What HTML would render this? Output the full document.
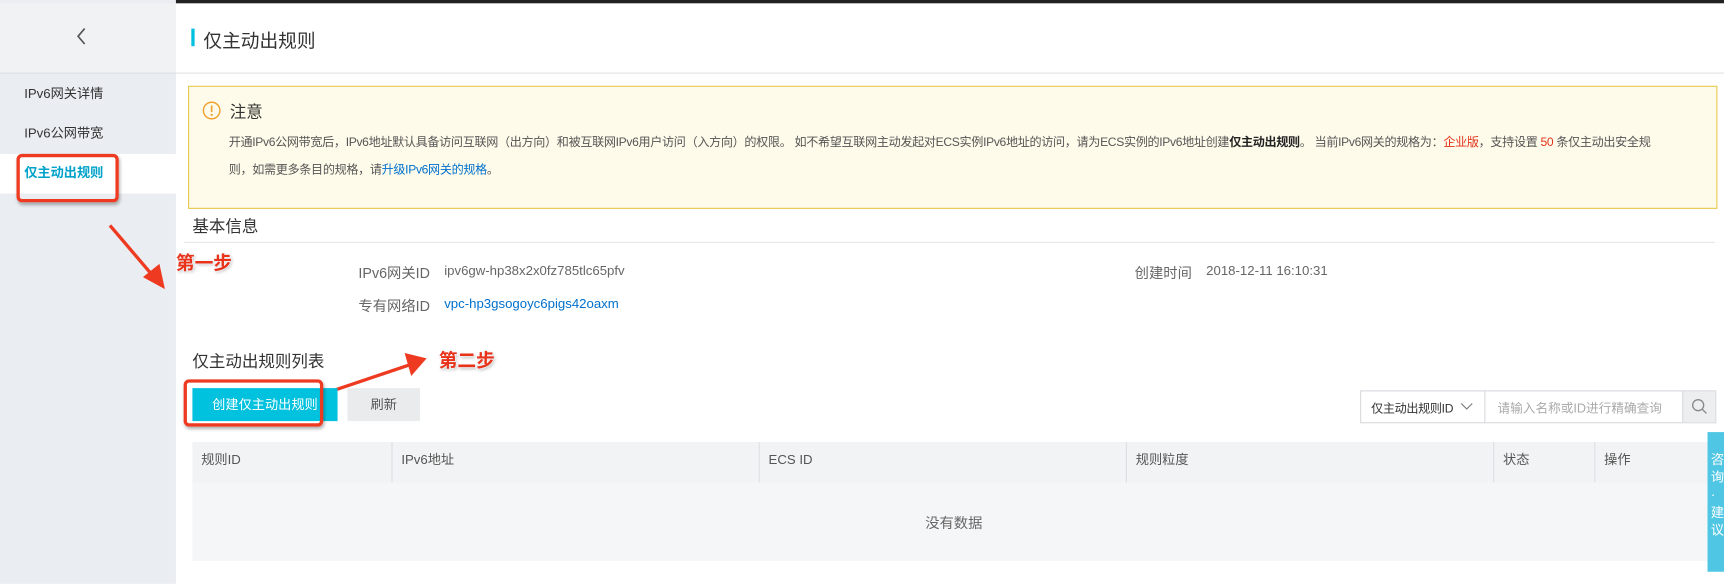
<!DOCTYPE html>
<html><head><meta charset="utf-8"><style>
*{margin:0;padding:0;box-sizing:border-box}
html,body{width:1724px;height:584px;overflow:hidden;background:#fff}
body{font-family:"Liberation Sans","Noto Sans CJK SC",sans-serif;color:#333;position:relative}
#w{position:absolute;left:0;top:0;width:1568px;height:531px;transform:scale(1.0995);transform-origin:0 0}
.a{position:absolute}
.note p{font-size:11px;letter-spacing:-0.3px;color:#555;line-height:25px;white-space:nowrap}
.th{position:absolute;top:402px;height:37px;font-size:12px;color:#555;line-height:33px;padding-left:8px;border-left:1px solid #dcdfe3}
.step{font-weight:bold;color:#e8321a;font-size:17px;text-shadow:0 0 2px #fff,0 0 3px #fff,1px 1px 3px #999}
</style></head><body><div id="w">
<div class="a" style="left:0;top:0;width:1568px;height:3px;background:#222"></div>
<div class="a" style="left:0;top:0;width:160px;height:531px;background:#eaedf1"></div>
<div class="a" style="left:0;top:3px;width:160px;height:63px;background:#f0f2f4"></div>
<div class="a" style="left:0;top:66px;width:160px;height:1px;background:#dcdfe3"></div>
<svg class="a" style="left:68px;top:25px" width="12" height="16"><path d="M9 1 L3 8 L9 15" stroke="#555" stroke-width="1.5" fill="none"/></svg>
<div class="a" style="left:22px;top:76px;font-size:12px;color:#333">IPv6网关详情</div>
<div class="a" style="left:22px;top:112px;font-size:12px;color:#333">IPv6公网带宽</div>
<div class="a" style="left:0;top:140px;width:160px;height:36px;background:#fff"></div>
<div class="a" style="left:22px;top:148px;font-size:12px;color:#00a2ca;font-weight:bold">仅主动出规则</div>
<div class="a" style="left:15px;top:140px;width:93px;height:44px;border:3px solid #ee3a20;border-radius:5px;box-shadow:1px 2px 3px rgba(0,0,0,.3)"></div>
<svg class="a" style="left:95px;top:200px" width="60" height="70"><line x1="5" y1="5" x2="45" y2="52" stroke="#ee3a20" stroke-width="3"/><polygon points="55,63 35,52 50,40" fill="#ee3a20"/></svg>
<div class="a step" style="left:160px;top:225px">第一步</div>

<div class="a" style="left:174px;top:26px;width:3px;height:16px;background:#00c1de"></div>
<div class="a" style="left:185px;top:23px;font-size:17px;color:#333">仅主动出规则</div>
<div class="a" style="left:160px;top:66px;width:1408px;height:1px;background:#e1e3e6"></div>

<div class="a note" style="left:171px;top:78px;width:1391px;height:112px;border:1px solid #e8c84e;background:#fffbea">
<svg class="a" style="left:12px;top:13px" width="17" height="17"><circle cx="8.5" cy="8.5" r="7.5" fill="none" stroke="#f0a030" stroke-width="1.3"/><line x1="8.5" y1="4" x2="8.5" y2="10" stroke="#f0a030" stroke-width="1.5"/><circle cx="8.5" cy="12.5" r="1" fill="#f0a030"/></svg>
<div class="a" style="left:37px;top:12px;font-size:15px;color:#333">注意</div>
<div class="a" style="left:36px;top:39px;width:1340px"><p>开通IPv6公网带宽后，IPv6地址默认具备访问互联网（出方向）和被互联网IPv6用户访问（入方向）的权限。 如不希望互联网主动发起对ECS实例IPv6地址的访问，请为ECS实例的IPv6地址创建<b style="color:#222">仅主动出规则</b>。 当前IPv6网关的规格为：<span style="color:#e0321a">企业版</span>，支持设置 <span style="color:#e0321a">50</span> 条仅主动出安全规<br>则，如需更多条目的规格，请<span style="color:#0070cc">升级IPv6网关的规格</span>。</p></div>
</div>

<div class="a" style="left:175px;top:195px;font-size:15px;color:#333">基本信息</div>
<div class="a" style="left:167px;top:220px;width:1393px;height:1px;background:#e5e7ea"></div>
<div class="a" style="left:326px;top:238px;font-size:13px;color:#666">IPv6网关ID</div>
<div class="a" style="left:404px;top:239px;font-size:12px;color:#666">ipv6gw-hp38x2x0fz785tlc65pfv</div>
<div class="a" style="left:326px;top:268px;font-size:13px;color:#666">专有网络ID</div>
<div class="a" style="left:404px;top:269px;font-size:12px;color:#0070cc">vpc-hp3gsogoyc6pigs42oaxm</div>
<div class="a" style="left:1032px;top:238px;font-size:13px;color:#666">创建时间</div>
<div class="a" style="left:1097px;top:239px;font-size:12px;color:#666">2018-12-11 16:10:31</div>

<div class="a" style="left:175px;top:318px;font-size:15px;color:#333">仅主动出规则列表</div>
<svg class="a" style="left:290px;top:318px" width="100" height="50"><line x1="5" y1="40" x2="85" y2="13" stroke="#ee3a20" stroke-width="3"/><polygon points="98,8 78,3 84,24" fill="#ee3a20"/></svg>
<div class="a step" style="left:399px;top:314px">第二步</div>
<div class="a" style="left:175px;top:353px;width:132px;height:30px;background:#00c1de;color:#fff;font-size:12px;line-height:30px;text-align:center">创建仅主动出规则</div>
<div class="a" style="left:167px;top:345px;width:127px;height:43px;border:3px solid #ee3a20;border-radius:5px;box-shadow:1px 2px 3px rgba(0,0,0,.3)"></div>
<div class="a" style="left:316px;top:353px;width:66px;height:30px;background:#e9ebed;color:#555;font-size:12px;line-height:30px;text-align:center">刷新</div>

<div class="a" style="left:1237px;top:355px;width:324px;height:30px;border:1px solid #d7d9dc"></div>
<div class="a" style="left:1247px;top:363px;font-size:11px;color:#333;letter-spacing:-0.3px">仅主动出规则ID</div>
<svg class="a" style="left:1328px;top:366px" width="12" height="8"><path d="M1 1 L6 6 L11 1" stroke="#777" fill="none"/></svg>
<div class="a" style="left:1350px;top:355px;width:1px;height:30px;background:#d7d9dc"></div>
<div class="a" style="left:1362px;top:363px;font-size:11.5px;color:#aaa">请输入名称或ID进行精确查询</div>
<div class="a" style="left:1530px;top:356px;width:30px;height:28px;background:#eceef0;border-left:1px solid #d7d9dc"></div>
<svg class="a" style="left:1538px;top:362px" width="16" height="16"><circle cx="6.5" cy="6.5" r="5" fill="none" stroke="#888" stroke-width="1.2"/><line x1="10" y1="10" x2="14" y2="14" stroke="#888" stroke-width="1.2"/></svg>

<div class="a" style="left:175px;top:402px;width:1385px;height:37px;background:#f2f3f4"></div>
<div class="a" style="left:175px;top:439px;width:1385px;height:71px;background:#f5f6f7"></div>
<div class="th" style="left:175px;border-left:none">规则ID</div>
<div class="th" style="left:356px">IPv6地址</div>
<div class="th" style="left:690px">ECS ID</div>
<div class="th" style="left:1024px">规则粒度</div>
<div class="th" style="left:1358px">状态</div>
<div class="th" style="left:1450px">操作</div>
<div class="a" style="left:175px;top:465px;width:1385px;text-align:center;font-size:13px;color:#666">没有数据</div>

<div class="a" style="left:1553px;top:393px;width:20px;height:127px;background:#4fc6e4"></div>
<div class="a" style="left:1556px;top:410px;width:12px;font-size:12px;line-height:16px;color:#fff">咨询·建议</div>
</div></body></html>
